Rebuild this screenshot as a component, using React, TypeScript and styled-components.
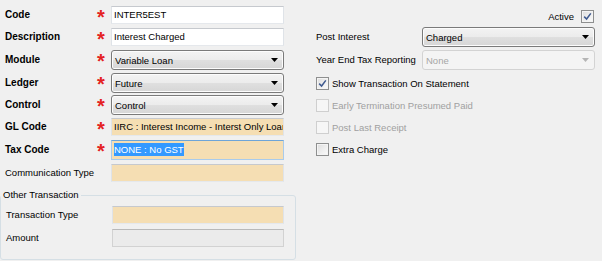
import React from "react";
import styled, { createGlobalStyle } from "styled-components";

const GlobalStyle = createGlobalStyle`
  html, body {
    margin: 0;
    background: #f0f0f0;
  }
  body {
    font-family: "Liberation Sans", Arial, sans-serif;
    font-size: 9.5px;
    color: #000;
  }
`;

const Pagina = styled.div`
  display: flex;
  width: 602px;
  height: 261px;
  overflow: hidden;
  background: #f0f0f0;
`;

const ColunaEsquerda = styled.div`
  width: 296px;
  padding-top: 6px;
  display: flex;
  flex-direction: column;
`;

const ColunaDireita = styled.div`
  width: 279px;
  margin-left: 20px;
  padding-top: 10px;
  display: flex;
  flex-direction: column;
`;

const Linha = styled.div<{ $h: number }>`
  display: grid;
  grid-template-columns: 92px 14px 173px;
  height: ${(p) => p.$h}px;
  padding-left: 5px;
  align-items: start;
`;

const Rotulo = styled.div<{ $bold?: boolean; $h: number }>`
  font-weight: ${(p) => (p.$bold ? "bold" : "normal")};
  font-size: ${(p) => (p.$bold ? "10px" : "9.5px")};
  line-height: ${(p) => p.$h}px;
  white-space: nowrap;
`;

const Asterisco = styled.span`
  display: block;
  color: #e42222;
  font-weight: bold;
  font-size: 20px;
  line-height: 18px;
  height: 18px;
  padding-top: 2px;
  overflow: visible;
`;

const Caixa = styled.div<{ $fundo?: "branco" | "trigo" | "inativo"; $foco?: boolean; $h?: number }>`
  box-sizing: border-box;
  height: ${(p) => p.$h ?? 18}px;
  width: 100%;
  padding: 0 2px;
  line-height: ${(p) => (p.$h ?? 18) - 2}px;
  white-space: nowrap;
  overflow: hidden;
  border: 1px solid;
  border-color: ${(p) =>
    p.$foco
      ? "#6ea5d8 #a9cbeb #a9cbeb #a9cbeb"
      : p.$fundo === "inativo"
      ? "#b9b9b9 #d2d2d2 #d2d2d2 #d2d2d2"
      : "#c6c9ce #dfe3e8 #e5e8ec #dfe3e8"};
  background: ${(p) =>
    p.$fundo === "trigo" ? "#f5deb3" : p.$fundo === "inativo" ? "#ebebeb" : "#fff"};
`;

const Selecionado = styled.span`
  background: #3399ff;
  color: #fff;
  padding: 1px 0;
`;

const Combo = styled.div<{ $inativo?: boolean }>`
  box-sizing: border-box;
  height: 20px;
  width: 100%;
  display: flex;
  align-items: center;
  justify-content: space-between;
  padding: 0 5px 0 3px;
  border-radius: 3px;
  border: 1px solid ${(p) => (p.$inativo ? "#d3d3d3" : "#7a7a7a")};
  color: ${(p) => (p.$inativo ? "#a6a6a6" : "#000")};
  background: ${(p) =>
    p.$inativo
      ? "#f4f4f4"
      : "linear-gradient(#f3f3f3 0%, #ececec 48%, #dfdfdf 52%, #d6d6d6 100%)"};
  box-shadow: ${(p) => (p.$inativo ? "none" : "inset 0 0 0 1px #fcfcfc")};
`;

const Seta = ({ cor }: { cor: string }) => (
  <svg width="7" height="4" viewBox="0 0 7 4">
    <polygon points="0,0 7,0 3.5,4" fill={cor} />
  </svg>
);

const Grupo = styled.fieldset`
  box-sizing: border-box;
  width: 296px;
  height: 71px;
  margin: 7px 0 0 0;
  padding: 5px 0 0 5px;
  border: 1px solid #d5dfe5;
  border-radius: 3px;
`;

const Legenda = styled.legend`
  padding: 0 2px;
  margin-left: -5px;
  font-size: 9.5px;
  line-height: 12px;
`;

const LinhaGrupo = styled.div<{ $h: number }>`
  display: grid;
  grid-template-columns: 106px 172px;
  height: ${(p) => p.$h}px;
  align-items: start;
`;

const LinhaAtivo = styled.div`
  display: flex;
  justify-content: flex-end;
  align-items: center;
  gap: 7px;
  height: 12px;
  padding-right: 1px;
`;

const LinhaPropriedade = styled.div<{ $mt: number }>`
  display: grid;
  grid-template-columns: 106px 173px;
  align-items: center;
  height: 20px;
  margin-top: ${(p) => p.$mt}px;
`;

const ListaOpcoes = styled.div`
  display: flex;
  flex-direction: column;
  gap: 9px;
  margin-top: 7px;
`;

const Opcao = styled.div<{ $inativo?: boolean }>`
  display: flex;
  align-items: center;
  gap: 3px;
  height: 13px;
  color: ${(p) => (p.$inativo ? "#a0a0a0" : "#000")};
  white-space: nowrap;
`;

const Quadrado = styled.span<{ $inativo?: boolean }>`
  box-sizing: border-box;
  width: 13px;
  height: 13px;
  display: flex;
  align-items: center;
  justify-content: center;
  border: 1px solid ${(p) => (p.$inativo ? "#cfcfcf" : "#8e8f8f")};
  background: ${(p) =>
    p.$inativo ? "#f6f6f6" : "linear-gradient(135deg, #dcdcdc 0%, #f0f0f0 60%, #fbfbfb 100%)"};
  box-shadow: ${(p) => (p.$inativo ? "none" : "inset 0 0 0 1px #f4f4f4")};
`;

const Marcador = ({ marcado, inativo }: { marcado?: boolean; inativo?: boolean }) => (
  <Quadrado $inativo={inativo}>
    {marcado && (
      <svg width="9" height="9" viewBox="0 0 9 9">
        <path d="M1.2 4.6 L3.6 7 L7.8 1.4" fill="none" stroke="#3f5a8f" strokeWidth="1.5" />
      </svg>
    )}
  </Quadrado>
);

type Campo = {
  rotulo: string;
  obrigatorio: boolean;
  h: number;
  tipo: "texto" | "combo";
  valor?: string;
  fundo?: "branco" | "trigo";
  foco?: boolean;
};

const campos: Campo[] = [
  { rotulo: "Code", obrigatorio: true, h: 22, tipo: "texto", valor: "INTER5EST" },
  { rotulo: "Description", obrigatorio: true, h: 22, tipo: "texto", valor: "Interest Charged" },
  { rotulo: "Module", obrigatorio: true, h: 23, tipo: "combo", valor: "Variable Loan" },
  { rotulo: "Ledger", obrigatorio: true, h: 22, tipo: "combo", valor: "Future" },
  { rotulo: "Control", obrigatorio: true, h: 23, tipo: "combo", valor: "Control" },
  { rotulo: "GL Code", obrigatorio: true, h: 22, tipo: "texto", valor: "IIRC : Interest Income - Interst Only Loan", fundo: "trigo" },
  { rotulo: "Tax Code", obrigatorio: true, h: 24, tipo: "texto", valor: "NONE : No GST", fundo: "trigo", foco: true },
  { rotulo: "Communication Type", obrigatorio: false, h: 18, tipo: "texto", fundo: "trigo" },
];

const App = () => {
  return (
    <>
      <GlobalStyle />
      <Pagina>
        <ColunaEsquerda>
          {campos.map((c) => {
            const alturaControle = c.tipo === "combo" ? 20 : c.foco ? 20 : 18;
            return (
              <Linha key={c.rotulo} $h={c.h}>
                <Rotulo $bold={c.obrigatorio} $h={alturaControle}>
                  {c.rotulo}
                </Rotulo>
                {c.obrigatorio ? <Asterisco>*</Asterisco> : <span />}
                {c.tipo === "combo" ? (
                  <Combo>
                    <span>{c.valor}</span>
                    <Seta cor="#000" />
                  </Combo>
                ) : (
                  <Caixa $fundo={c.fundo} $foco={c.foco} $h={alturaControle}>
                    {c.foco ? <Selecionado>{c.valor}</Selecionado> : c.valor}
                  </Caixa>
                )}
              </Linha>
            );
          })}
          <Grupo>
            <Legenda>Other Transaction</Legenda>
            <LinhaGrupo $h={23}>
              <Rotulo $h={18}>Transaction Type</Rotulo>
              <Caixa $fundo="trigo" />
            </LinhaGrupo>
            <LinhaGrupo $h={18}>
              <Rotulo $h={18}>Amount</Rotulo>
              <Caixa $fundo="inativo" />
            </LinhaGrupo>
          </Grupo>
        </ColunaEsquerda>

        <ColunaDireita>
          <LinhaAtivo>
            <span>Active</span>
            <Marcador marcado />
          </LinhaAtivo>
          <LinhaPropriedade $mt={5}>
            <Rotulo $h={20}>Post Interest</Rotulo>
            <Combo>
              <span>Charged</span>
              <Seta cor="#000" />
            </Combo>
          </LinhaPropriedade>
          <LinhaPropriedade $mt={3}>
            <Rotulo $h={20}>Year End Tax Reporting</Rotulo>
            <Combo $inativo>
              <span>None</span>
              <Seta cor="#b5b5b5" />
            </Combo>
          </LinhaPropriedade>
          <ListaOpcoes>
            <Opcao>
              <Marcador marcado />
              Show Transaction On Statement
            </Opcao>
            <Opcao $inativo>
              <Marcador inativo />
              Early Termination Presumed Paid
            </Opcao>
            <Opcao $inativo>
              <Marcador inativo />
              Post Last Receipt
            </Opcao>
            <Opcao>
              <Marcador />
              Extra Charge
            </Opcao>
          </ListaOpcoes>
        </ColunaDireita>
      </Pagina>
    </>
  );
};

export default App;
